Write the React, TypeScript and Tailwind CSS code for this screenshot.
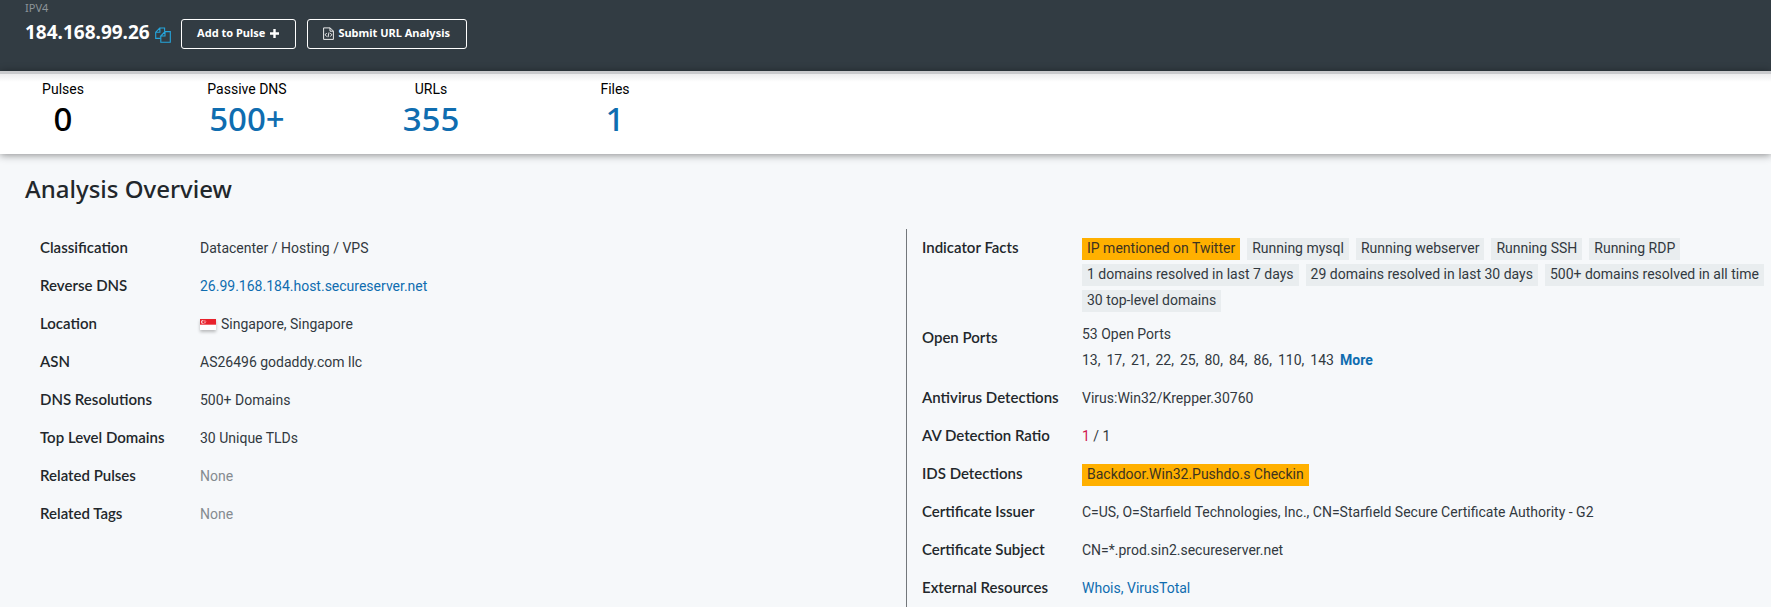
import type { ReactNode } from "react";

type Fact = { label: string; value: ReactNode };

function Tag({ children, alert = false }: { children: ReactNode; alert?: boolean }) {
  return (
    <span
      className={
        alert
          ? "h-[22px] whitespace-nowrap bg-[#ffb000] px-[5px] leading-5 text-[#3d3320]"
          : "h-[22px] whitespace-nowrap bg-[#e9edef] px-[5px] leading-5"
      }
    >
      {children}
    </span>
  );
}

function Link({ children }: { children: ReactNode }) {
  return (
    <a href="#" className="text-[#0f6db0] hover:underline">
      {children}
    </a>
  );
}

function CopyIcon() {
  return (
    <svg viewBox="0 0 16 16" className="size-4" fill="none" stroke="#25a5dc" strokeWidth="1.1" aria-hidden="true">
      <path d="M5.6 11.4H.7V5.2L4.7 1h4.9v3.6M4.9 1v4.2H.7" />
      <path d="M5.8 9v6.2h9.5V4.6H10L5.8 9H10V4.6" />
    </svg>
  );
}

function CodeFileIcon() {
  return (
    <svg viewBox="0 0 11 13" className="h-[13px] w-[11px]" fill="none" stroke="#fff" strokeWidth="0.9" aria-hidden="true">
      <path d="M.6.9h6.6l3.2 3.2v8.3H.6zM7 .9v3.3h3.4" />
      <path d="M3.7 6L2.2 7.8l1.5 1.8M7.3 6l1.5 1.8-1.5 1.8M6 5.4L5 10.2" />
    </svg>
  );
}

function PlusIcon() {
  return (
    <svg viewBox="0 0 9 9" className="size-[9px]" aria-hidden="true">
      <path d="M4.5 0v9M0 4.5h9" stroke="#fff" strokeWidth="2.4" />
    </svg>
  );
}

function SingaporeFlag() {
  return (
    <svg viewBox="0 0 16 11" className="h-[11px] w-4 shadow-[0_2px_3px_rgba(0,0,0,0.25)]" role="img" aria-label="Flag of Singapore">
      <path fill="#fff" d="M0 0h16v11H0z" />
      <path fill="#e8222c" d="M0 0h16v5.7H0z" />
      <circle cx="3" cy="2.9" r="1.9" fill="#fff" />
      <circle cx="3.8" cy="2.9" r="1.6" fill="#e8222c" />
      <g fill="#fff">
        <circle cx="5" cy="1.7" r=".45" />
        <circle cx="4.1" cy="2.6" r=".45" />
        <circle cx="5.9" cy="2.6" r=".45" />
        <circle cx="4.5" cy="3.8" r=".45" />
        <circle cx="5.6" cy="3.8" r=".45" />
      </g>
    </svg>
  );
}

function FactList({ facts }: { facts: Fact[] }) {
  return (
    <dl>
      {facts.map((fact) => (
        <div key={fact.label} className="flex min-h-[38px]">
          <dt className="w-40 shrink-0 font-['Lato',sans-serif] text-[15px] font-semibold leading-9">{fact.label}</dt>
          <dd className="min-w-0 flex-1 leading-[38px] text-[#32393f]">{fact.value}</dd>
        </div>
      ))}
    </dl>
  );
}

const stats = [
  { label: "Pulses", value: "0", muted: true },
  { label: "Passive DNS", value: "500+" },
  { label: "URLs", value: "355" },
  { label: "Files", value: "1" },
];

const ports = [13, 17, 21, 22, 25, 80, 84, 86, 110, 143];

const indicatorTags = [
  "Running mysql",
  "Running webserver",
  "Running SSH",
  "Running RDP",
  "1 domains resolved in last 7 days",
  "29 domains resolved in last 30 days",
  "500+ domains resolved in all time",
  "30 top-level domains",
];

const leftFacts: Fact[] = [
  { label: "Classification", value: "Datacenter / Hosting / VPS" },
  { label: "Reverse DNS", value: <Link>26.99.168.184.host.secureserver.net</Link> },
  {
    label: "Location",
    value: (
      <span className="flex items-center gap-[5px]">
        <SingaporeFlag />
        Singapore, Singapore
      </span>
    ),
  },
  { label: "ASN", value: "AS26496 godaddy.com llc" },
  { label: "DNS Resolutions", value: "500+ Domains" },
  { label: "Top Level Domains", value: "30 Unique TLDs" },
  { label: "Related Pulses", value: <span className="text-[#858b90]">None</span> },
  { label: "Related Tags", value: <span className="text-[#858b90]">None</span> },
];

const rightFacts: Fact[] = [
  {
    label: "Indicator Facts",
    value: (
      <div className="flex flex-wrap gap-x-[7px] gap-y-1 pt-[9px] pb-[7px]">
        <Tag alert>IP mentioned on Twitter</Tag>
        {indicatorTags.map((tag) => (
          <Tag key={tag}>{tag}</Tag>
        ))}
      </div>
    ),
  },
  {
    label: "Open Ports",
    value: (
      <div className="pt-0.5 pb-1.5 leading-[26px]">
        <p>53 Open Ports</p>
        <p className="flex flex-wrap gap-x-1.5">
          {ports.map((port, i) => (
            <span key={port}>{i < ports.length - 1 ? `${port},` : port}</span>
          ))}
          <a href="#" className="font-bold text-[#0f6db0]">
            More
          </a>
        </p>
      </div>
    ),
  },
  { label: "Antivirus Detections", value: "Virus:Win32/Krepper.30760" },
  {
    label: "AV Detection Ratio",
    value: (
      <>
        <span className="text-[#d0164f]">1</span> / 1
      </>
    ),
  },
  {
    label: "IDS Detections",
    value: (
      <div className="flex pt-[9px]">
        <Tag alert>Backdoor.Win32.Pushdo.s Checkin</Tag>
      </div>
    ),
  },
  {
    label: "Certificate Issuer",
    value: "C=US, O=Starfield Technologies, Inc., CN=Starfield Secure Certificate Authority - G2",
  },
  { label: "Certificate Subject", value: "CN=*.prod.sin2.secureserver.net" },
  {
    label: "External Resources",
    value: (
      <>
        <Link>Whois,</Link> <Link>VirusTotal</Link>
      </>
    ),
  },
];

export default function App() {
  return (
    <div className="min-h-screen bg-[#f6f8fa] font-['Roboto',sans-serif] text-sm text-[#22272b]">
      <header className="h-[71px] bg-[#323c43] pl-[25px] font-['Noto_Sans',sans-serif] text-white">
        <p className="pt-px text-[11px] leading-[14px] text-[#8d9499]">IPV4</p>
        <div className="flex items-center">
          <h1 className="text-[19px] font-bold leading-7">184.168.99.26</h1>
          <button type="button" aria-label="Copy address" className="ml-[5px] mt-1.5">
            <CopyIcon />
          </button>
          <button
            type="button"
            className="ml-2.5 mt-1 flex h-[30px] w-[115px] items-center justify-center gap-[5px] rounded-[3px] border border-white pb-0.5 text-[11px] font-bold"
          >
            Add to Pulse
            <PlusIcon />
          </button>
          <button
            type="button"
            className="ml-[11px] mt-1 flex h-[30px] w-40 items-center justify-center gap-1 rounded-[3px] border border-white pb-0.5 text-[11px] font-bold"
          >
            <CodeFileIcon />
            Submit URL Analysis
          </button>
        </div>
      </header>

      <section className="flex h-[83px] gap-[104px] border-t-[3px] border-[#c9cacd] bg-white bg-linear-to-b from-[#ececee] to-white to-[8px] pl-[23px] pt-[3px] text-black shadow-[0_1px_8px_rgba(0,0,0,0.45)]">
        {stats.map((stat) => (
          <div key={stat.label} className="w-20 whitespace-nowrap text-center">
            <p className="leading-6">{stat.label}</p>
            <p
              className={
                stat.muted
                  ? "font-['Noto_Sans',sans-serif] text-[33px] font-medium leading-9"
                  : "font-['Noto_Sans',sans-serif] text-[33px] font-medium leading-9 text-[#0f6db0]"
              }
            >
              {stat.value}
            </p>
          </div>
        ))}
      </section>

      <main>
        <h2 className="px-[25px] pt-[17px] font-['Noto_Sans',sans-serif] text-2xl font-medium leading-9">
          Analysis Overview
        </h2>
        <div className="mt-[22px] grid grid-cols-[866fr_865fr] pl-10">
          <FactList facts={leftFacts} />
          <div className="border-l border-[#73777b] pl-[15px]">
            <FactList facts={rightFacts} />
          </div>
        </div>
      </main>
    </div>
  );
}
